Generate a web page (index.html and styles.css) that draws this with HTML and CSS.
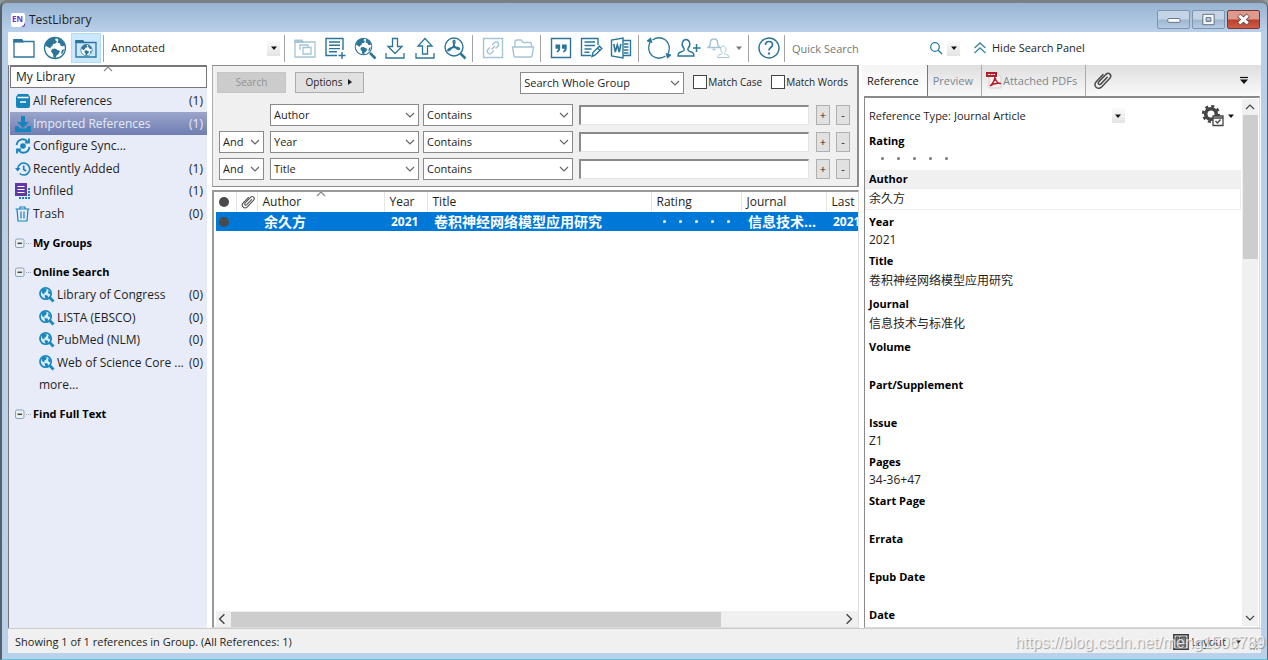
FILE: index.html
```html
<!DOCTYPE html>
<html lang="en">
<head>
<meta charset="utf-8">
<title>TestLibrary</title>
<link rel="stylesheet" href="styles.css">
</head>
<body>
<svg class="defs" aria-hidden="true">
  <symbol id="globe" viewBox="0 0 24 24">
    <circle cx="12" cy="12" r="10.500" fill="#fff" stroke="currentColor" stroke-width="1.300"/>
    <path fill="currentColor" d="M3 7 6 3.500l5-2.200 2 .8-1 2 2 1.200-1.500 2.200-2.500.5-.5 2-2 1 .5 1.500-2-.8L4 10.500 2.500 10zM15 2l4 2.500L22 9l-2.500 1.500-2-1-.5-2-2.500-.7.8-2.300zM9 13l3-.5 3 1.800 2 .7-1.500 3-2 1.500-1 2.700-2-.7-.5-3.500-2-2.500zM19 14l2.500-1-2 4.500-1.500.5z"/>
  </symbol>
  <symbol id="chevron" viewBox="0 0 10 10"><path d="m1 3 4 4 4-4" fill="none" stroke="currentColor" stroke-width="1.200"/></symbol>
  <symbol id="caret" viewBox="0 0 10 10"><path d="M2 3.500h6L5 7z" fill="currentColor"/></symbol>
  <symbol id="clip" viewBox="0 0 20 20"><path d="m13.500 7-6 6.200c-1.800 1.600-3.600-.3-2-2l6.700-7c2.800-2.600 6.300.7 3.800 3.600l-7.800 8.300C4.400 19.500-.3 15 3 11.200l6.500-6.800" transform="translate(1 0)" fill="none" stroke="currentColor" stroke-width="1.400" stroke-linecap="round"/></symbol>
  <symbol id="globesearch" viewBox="0 0 17 17">
    <path d="m11 11 4.500 4.500" stroke="#1a87c0" stroke-width="3"/>
    <circle cx="7" cy="7" r="6" fill="#d9ecf8" stroke="#1a87c0" stroke-width="1.800"/>
    <path fill="#1a87c0" d="m3 3 3-1.500L8.500 3 7 5.500 5.500 6l.5 2-3-1.500zM9.500 3.500l3 2L12 8l-2-1zM6 8.500l3 .5 1 1.500L8 13l-1.500-1z"/>
  </symbol>
  <symbol id="collapse" viewBox="0 0 17 11">
    <rect x=".5" y="1" width="8.500" height="8.500" rx="1.500" fill="#eceef0" stroke="#86a5bd"/>
    <path d="M2.500 5.300h4.500" stroke="#4b4b3c" stroke-width="1.500"/><path d="M11 5.500h6" stroke="#9aa8ba" stroke-dasharray="1 1"/>
  </symbol>
  <symbol id="person" viewBox="0 0 20 20"><path d="M7 10.500C3.500 7 5.500 1.500 9 1.500s5.500 5.500 2 9c-.5 1.500 0 2.300 1.500 2.800l3 1.200c1.300.6 1.500 1.500 1.500 3.500H1c0-2 .3-2.900 1.500-3.500l3-1.200C7 12.800 7.500 12 7 10.500z" fill="none" stroke="currentColor" stroke-width="1.400"/></symbol>
</svg>

<div class="window">
  <header class="titlebar">
    <svg class="app-icon" viewBox="0 0 16 16"><rect x="1" y="1" width="14" height="14" rx="2" fill="#fff"/><path d="M10 15q4 0 5-5v3q0 2-2 2z" fill="#5a2ab8"/><text x="2" y="9.500" class="app-letters">EN</text></svg>
    <h1 class="window-title">TestLibrary</h1>
    <div class="window-buttons">
      <button class="win-btn" aria-label="Minimize"><svg viewBox="0 0 32 18"><rect x="10" y="8" width="13" height="4" rx="1" fill="#fff" stroke="#5d6b7c"/></svg></button>
      <button class="win-btn" aria-label="Maximize"><svg viewBox="0 0 32 18"><path d="M10 3.500h12v11H10zM13.500 7v4h5V7z" fill="#f5f5f5" fill-rule="evenodd" stroke="#5d6b7c"/></svg></button>
      <button class="win-btn win-close" aria-label="Close"><svg viewBox="0 0 32 18"><path d="m11 4.500 10 9m0-9-10 9" stroke="#6a4a4a" stroke-width="5"/><path d="m11.500 5 9 8m0-8-9 8" stroke="#fff" stroke-width="3.200"/></svg></button>
    </div>
  </header>

  <div class="client">
    <div class="toolbar" role="toolbar">
      <div class="tool-group tool-modes">
        <button class="tool" aria-label="Local library"><svg viewBox="0 0 24 24"><path d="M2 5.500h20V21H2z" fill="none" stroke="currentColor" stroke-width="1.300"/><path d="M1.200 6.500V3h9l1.500 2.500v1z" fill="currentColor"/></svg></button>
        <button class="tool" aria-label="Online search"><svg viewBox="0 0 24 24"><use href="#globe"/></svg></button>
        <button class="tool tool-on" aria-label="Integrated library"><svg viewBox="0 0 24 24"><path d="M2 6.500h20V21H2z" fill="none" stroke="currentColor" stroke-width="1.300"/><path d="M1.200 7V4h8l1.500 2.500V7z" fill="currentColor"/><use href="#globe" x="6" y="7.500" width="13" height="13"/></svg></button>
      </div>
      <span class="sep sep-tight"></span>
      <div class="pick style-pick"><select aria-label="Output style"><option>Annotated</option></select><span class="drop"><svg><use href="#caret"/></svg></span></div>
      <span class="sep"></span>
      <div class="tool-group">
        <button class="tool" disabled aria-label="Copy to group"><svg viewBox="0 0 24 24" fill="none" stroke="currentColor" stroke-width="1.300"><path d="M2 6h20v15H2z"/><path d="M1.200 7V3.500h8L11 6v1z" fill="currentColor" stroke="none"/><path d="M7 14V9h8v2M10 11.500h8V18h-8z"/></svg></button>
        <button class="tool" aria-label="New reference"><svg viewBox="0 0 24 24" fill="none" stroke="currentColor" stroke-width="1.400"><path d="M14 19.500H3v-17h17V14M6 6h11M6 9.300h11M6 12.600h11M6 15.800h8M19 16v7M15.500 19.500h7"/></svg></button>
        <button class="tool" aria-label="Online search"><svg viewBox="0 0 24 24"><path d="m17 17 5.500 5.500" stroke="currentColor" stroke-width="2.500"/><use href="#globe" x="1" y="1" width="19" height="19"/></svg></button>
        <button class="tool" aria-label="Import"><svg viewBox="0 0 24 24" fill="none" stroke="currentColor" stroke-width="1.300"><path d="M3 17v5h18v-5M9.500 2.500h5v8h4.500L12 17.500 5 10.500h4.500z"/></svg></button>
        <button class="tool" aria-label="Export"><svg viewBox="0 0 24 24" fill="none" stroke="currentColor" stroke-width="1.300"><path d="M3 17v5h18v-5M9.500 18h5v-8h4.500L12 2.500 5 10h4.500z"/></svg></button>
        <button class="tool" aria-label="Find full text"><svg viewBox="0 0 24 24" fill="none" stroke="currentColor" stroke-width="1.400"><circle cx="11" cy="11" r="9"/><path d="m17.500 17.500 5 5" stroke-width="2.500"/><path d="M10.500 4.500q2-.5 1.300 2.500-1 4-5.300 7.500-1.500.8-1.700-.2.500-1.800 5-2.800 4.500-.8 6.500.7.800 1.300-1 1.300-3-.8-4.700-5.500-.8-2.500-.1-3.500z"/></svg></button>
      </div>
      <span class="sep"></span>
      <div class="tool-group">
        <button class="tool" disabled aria-label="Open link"><svg viewBox="0 0 24 24" fill="none" stroke="currentColor" stroke-width="1.400"><path d="M2.500 2.500h19v19h-19z"/><path d="m10.500 13.500 3.500-3.500m-3-1 2.500-2.500q2-1.500 3.500 0t0 3.500L14.500 12.500m-1.500 2L10.500 17q-2 1.500-3.500 0t0-3.500l2-2"/></svg></button>
        <button class="tool" disabled aria-label="Open file"><svg viewBox="0 0 24 24" fill="none" stroke="currentColor" stroke-width="1.400"><path d="M4 11V6q0-2 2-2h4l2 2.500h7q1.500 0 1.500 2V11M1.500 11h21L21 20q-.3 1-1.500 1h-15q-1.200 0-1.500-1z"/></svg></button>
      </div>
      <span class="sep"></span>
      <div class="tool-group">
        <button class="tool" aria-label="Insert citation"><svg viewBox="0 0 24 24"><path d="M2.500 2.500h19v19h-19z" fill="none" stroke="currentColor" stroke-width="1.400"/><path d="M6.500 8.500h4.700v4q0 3-3.500 4v-1.600q1.400-.6 1.500-2.200H6.500zM13 8.500h4.700v4q0 3-3.500 4v-1.600q1.400-.6 1.500-2.200H13z" fill="currentColor"/></svg></button>
        <button class="tool" aria-label="Format bibliography"><svg viewBox="0 0 24 24" fill="none" stroke="currentColor" stroke-width="1.400"><path d="M12 19.500H2.500v-17H19V9M5.500 6H16M5.500 9.500H16M5.500 13h7M5.500 16.200h5M13 20.500l1-4 6.500-6.500 2.300 2.500-6.500 6.500zM18.500 12l2.300 2.500"/></svg></button>
        <button class="tool" aria-label="Go to word processor"><svg viewBox="0 0 24 24" fill="none" stroke="currentColor" stroke-width="1.400"><path d="M14 2v20L2.500 20V4zM14 4.500h7.500v15H14M15 8h4.500m-4.500 3h4.500m-4.500 3h4.500m-4.500 3h4.500"/><path d="m4.800 8 1.500 8 2-7 2 7 1.500-8" stroke-width="1.600"/></svg></button>
      </div>
      <span class="sep"></span>
      <div class="tool-group">
        <button class="tool" aria-label="Sync library"><svg viewBox="0 0 24 24" fill="none" stroke="currentColor" stroke-width="1.300"><path d="M5.500 4Q12-.5 18.500 4 24.500 9.500 21 18M18.500 20Q12 24.500 5.500 20-.5 14.500 3 6"/><path d="m19.500 18 1 3.500 3-2.500zM4.500 6l-1-3.500-3 2.500z" fill="currentColor" transform="translate(0 0)"/></svg></button>
        <button class="tool" aria-label="Share library"><svg viewBox="0 0 24 24"><use href="#person" x="0" y="2" width="20" height="20"/><path d="M19.500 8v8M16 12h7.500" stroke="currentColor" stroke-width="1.500"/></svg></button>
        <button class="tool" disabled aria-label="Activity feed"><svg viewBox="0 0 24 24"><path d="M1 11.500q2.500-1.500 2.500-5T7 3t3.500 3.500 2.500 5zM5.500 13.500h3" fill="none" stroke="currentColor" stroke-width="1.400"/><use href="#person" x="10" y="9" width="14" height="14"/></svg></button>
        <button class="mini-caret" aria-label="More activity"><svg><use href="#caret"/></svg></button>
      </div>
      <span class="sep"></span>
      <button class="tool" aria-label="Help"><svg viewBox="0 0 24 24" fill="none" stroke="currentColor" stroke-width="1.400"><circle cx="12" cy="12" r="10"/><path d="M8.500 9q0-3.500 3.500-3.500t3.500 3.200q0 1.600-1.800 2.700T12 14.500" stroke-width="1.700"/><path d="M12 16.500v2" stroke-width="2.200"/></svg></button>
      <span class="sep sep-last"></span>
      <input class="quick" type="text" placeholder="Quick Search" aria-label="Quick Search">
      <button class="find" aria-label="Run quick search"><svg viewBox="0 0 14 14"><circle cx="6" cy="6" r="4.300" fill="none" stroke="currentColor" stroke-width="1.300"/><path d="m9 9 4 4" stroke="currentColor" stroke-width="1.500"/></svg></button>
      <button class="drop" aria-label="Search options"><svg><use href="#caret"/></svg></button>
      <button class="hide-panel"><svg viewBox="0 0 14 14"><path d="m1.500 7 5.500-5 5.500 5m-11 5L7 7l5.500 5" fill="none" stroke="#3c84a4" stroke-width="1.300"/></svg>Hide Search Panel</button>
    </div>

    <main class="panes">
      <nav class="sidebar">
        <button class="library-head">My Library<svg class="sort-up"><use href="#chevron"/></svg></button>
        <ul class="groups">
          <li class="group"><svg viewBox="0 0 16 16"><path d="M3 1h10l2 3v9q0 2-2 2H3q-2 0-2-2V4z" fill="#1684bd"/><path d="M2.500 4.500h11M5 9h6" stroke="#fff" stroke-width="1.500"/></svg><span>All References</span><span class="count">(1)</span></li>
          <li class="group group-on"><svg viewBox="0 0 16 16"><path d="M6 0h4v6h4l-6 6-6-6h4zM0 10h3l2 2.500h6L13 10h3v6H0z" fill="#1684bd"/></svg><span>Imported References</span><span class="count">(1)</span></li>
          <li class="group"><svg viewBox="0 0 16 16"><circle cx="8" cy="8" r="2.800" fill="#1684bd"/><path d="M1.500 7q.8-5 5.500-5.700 3.500-.3 6 2.700M14.500 9q-.8 5-5.500 5.700-3.500.3-6-2.700M14 .5v4h-4M2 15.500v-4h4" fill="none" stroke="#1684bd" stroke-width="1.800"/></svg><span>Configure Sync...</span></li>
          <li class="group"><svg viewBox="0 0 16 16"><path d="M2.700 8a6 6 0 1 1 2 4.500M8.700 4.500v4l2.500 1.500" fill="none" stroke="#1684bd" stroke-width="1.600"/><path d="M0 7h5.500L2.700 10.500z" fill="#1684bd"/></svg><span>Recently Added</span><span class="count">(1)</span></li>
          <li class="group"><svg viewBox="0 0 16 16"><path d="M4 15h10V4" fill="none" stroke="#1684bd" stroke-width="2" stroke-dasharray="2 1"/><path d="M0 0h12v13H0z" fill="#6338a6"/><path d="M2.500 3.500h7m-7 3h7m-7 3h7" stroke="#fff" stroke-width="1.200"/></svg><span>Unfiled</span><span class="count">(1)</span></li>
          <li class="group"><svg viewBox="0 0 16 16" fill="none" stroke="#1684bd" stroke-width="1.200"><path d="M.5 3h14M5 3V1h5v2M2 3l1 12h9l1-12M6 5.500v7M9 5.500v7"/></svg><span>Trash</span><span class="count">(0)</span></li>
        </ul>
        <h2 class="group-title"><svg><use href="#collapse"/></svg>My Groups</h2>
        <h2 class="group-title"><svg><use href="#collapse"/></svg>Online Search</h2>
        <ul class="groups online">
          <li class="group"><svg><use href="#globesearch"/></svg><span>Library of Congress</span><span class="count">(0)</span></li>
          <li class="group"><svg><use href="#globesearch"/></svg><span>LISTA (EBSCO)</span><span class="count">(0)</span></li>
          <li class="group"><svg><use href="#globesearch"/></svg><span>PubMed (NLM)</span><span class="count">(0)</span></li>
          <li class="group"><svg><use href="#globesearch"/></svg><span>Web of Science Core ...</span><span class="count">(0)</span></li>
          <li class="group"><span>more...</span></li>
        </ul>
        <h2 class="group-title"><svg><use href="#collapse"/></svg>Find Full Text</h2>
      </nav>

      <section class="center">
        <form class="search-panel">
          <div class="search-top">
            <button class="push" type="button" disabled>Search</button>
            <button class="push" type="button">Options<svg viewBox="0 0 5 8"><path d="M0 1v6l4-3z" fill="currentColor"/></svg></button>
            <div class="pick scope"><select aria-label="Search scope"><option>Search Whole Group</option></select><svg><use href="#chevron"/></svg></div>
            <label class="check"><input type="checkbox">Match Case</label>
            <label class="check"><input type="checkbox">Match Words</label>
          </div>
          <div class="rule">
            <span class="join"></span>
            <div class="pick field"><select aria-label="Field 1"><option>Author</option></select><svg><use href="#chevron"/></svg></div>
            <div class="pick operator"><select aria-label="Operator 1"><option>Contains</option></select><svg><use href="#chevron"/></svg></div>
            <input class="term" type="text" aria-label="Search term 1">
            <button class="step" type="button">+</button><button class="step" type="button">-</button>
          </div>
          <div class="rule">
            <div class="pick join"><select aria-label="Join 2"><option>And</option></select><svg><use href="#chevron"/></svg></div>
            <div class="pick field"><select aria-label="Field 2"><option>Year</option></select><svg><use href="#chevron"/></svg></div>
            <div class="pick operator"><select aria-label="Operator 2"><option>Contains</option></select><svg><use href="#chevron"/></svg></div>
            <input class="term" type="text" aria-label="Search term 2">
            <button class="step" type="button">+</button><button class="step" type="button">-</button>
          </div>
          <div class="rule">
            <div class="pick join"><select aria-label="Join 3"><option>And</option></select><svg><use href="#chevron"/></svg></div>
            <div class="pick field"><select aria-label="Field 3"><option>Title</option></select><svg><use href="#chevron"/></svg></div>
            <div class="pick operator"><select aria-label="Operator 3"><option>Contains</option></select><svg><use href="#chevron"/></svg></div>
            <input class="term" type="text" aria-label="Search term 3">
            <button class="step" type="button">+</button><button class="step" type="button">-</button>
          </div>
        </form>

        <div class="results">
          <div class="results-view">
            <table class="refs">
              <colgroup><col class="c-read"><col class="c-clip"><col class="c-author"><col class="c-year"><col class="c-title"><col class="c-rating"><col class="c-journal"><col class="c-last"></colgroup>
              <thead><tr>
                <th aria-label="Read status"><span class="dot"></span></th>
                <th aria-label="Attachments"><svg class="th-clip"><use href="#clip"/></svg></th>
                <th class="sorted">Author<svg class="sort-up"><use href="#chevron"/></svg></th>
                <th>Year</th><th>Title</th><th>Rating</th><th>Journal</th><th>Last U</th>
              </tr></thead>
              <tbody><tr>
                <td><span class="dot"></span></td><td></td><td>余久方</td><td>2021</td><td>卷积神经网络模型应用研究</td>
                <td><span class="stars stars-light"><i></i><i></i><i></i><i></i><i></i></span></td><td>信息技术...</td><td>2021</td>
              </tr></tbody>
            </table>
          </div>
          <div class="hscroll"><svg class="left"><use href="#chevron"/></svg><div class="htrack"><div class="hthumb"></div></div><svg class="right"><use href="#chevron"/></svg></div>
        </div>
      </section>

      <aside class="details">
        <div class="tabs">
          <button class="tab tab-on">Reference</button>
          <button class="tab">Preview</button>
          <button class="tab tab-pdf"><svg viewBox="0 0 16 17"><path d="M3 1h8l4 4v11H3z" fill="#f4f2f2" stroke="#d5cfcf"/><path d="M0 0h11v5H0z" fill="#b3202c"/><path d="M2 2.500h7" stroke="#fff" stroke-dasharray="2 .7"/><path d="M9 5q-.5 5-5 9 4-3.500 11-2.500-5 0-6-6.500z" fill="none" stroke="#b3202c" stroke-width="1.500"/></svg>Attached PDFs</button>
          <button class="tab tab-clip" aria-label="Attach file"><svg><use href="#clip"/></svg></button>
          <button class="tab-menu" aria-label="Panel menu"><svg viewBox="0 0 10 10"><path d="M1 1.500h8" stroke="currentColor" stroke-width="1.200"/><path d="M1 3.500h8L5 8z" fill="currentColor"/></svg></button>
        </div>
        <div class="record">
          <div class="record-body">
            <div class="type-row">
              <label for="ref-type">Reference Type:</label>
              <div class="pick type-pick"><select id="ref-type"><option>Journal Article</option></select><span class="drop"><svg><use href="#caret"/></svg></span></div>
              <button class="gear" aria-label="Field settings"><svg class="gear-icon" viewBox="0 0 22 22"><circle cx="9" cy="9" r="5.300" fill="none" stroke="#454545" stroke-width="3.600"/><circle cx="9" cy="9" r="7.800" fill="none" stroke="#454545" stroke-width="2.600" stroke-dasharray="3.060 3.060"/><path d="M11 11h10v9.500H11z" fill="#fff" stroke="#454545" stroke-width="1.300"/><path d="M11 13h10m-7.500 3 2 2 3-3.500" fill="none" stroke="#454545" stroke-width="1.300"/></svg><svg class="gear-caret"><use href="#caret"/></svg></button>
            </div>
            <dl class="fields">
              <div class="entry"><dt>Rating</dt><dd><span class="stars"><i></i><i></i><i></i><i></i><i></i></span></dd></div>
              <div class="entry entry-on"><dt>Author</dt><dd class="han">余久方</dd></div>
              <div class="entry"><dt>Year</dt><dd class="latin">2021</dd></div>
              <div class="entry"><dt>Title</dt><dd class="han">卷积神经网络模型应用研究</dd></div>
              <div class="entry"><dt>Journal</dt><dd class="han">信息技术与标准化</dd></div>
              <div class="entry"><dt>Volume</dt><dd></dd></div>
              <div class="entry"><dt>Part/Supplement</dt><dd></dd></div>
              <div class="entry"><dt>Issue</dt><dd class="latin">Z1</dd></div>
              <div class="entry"><dt>Pages</dt><dd class="latin">34-36+47</dd></div>
              <div class="entry"><dt>Start Page</dt><dd></dd></div>
              <div class="entry"><dt>Errata</dt><dd></dd></div>
              <div class="entry"><dt>Epub Date</dt><dd></dd></div>
              <div class="entry"><dt>Date</dt></div>
            </dl>
          </div>
          <div class="vscroll"><svg class="up"><use href="#chevron"/></svg><div class="vtrack"><div class="vthumb"></div></div><svg><use href="#chevron"/></svg></div>
        </div>
      </aside>
    </main>

    <footer class="status">
      <span>Showing 1 of 1 references in Group. (All References: 1)</span>
      <button class="layout"><svg class="layout-icon" viewBox="0 0 16 16"><path d="M.8.8h14.400v14.400H.8z" fill="#ddd" stroke="#3c3c3c" stroke-width="1.500"/><path d="M3 3h3v10H3zM7.500 3H13v6H7.500zM7.500 10.500H13V13H7.500z" fill="#777" stroke="#444"/></svg>Layout<svg class="layout-caret"><use href="#caret"/></svg></button>
      <svg class="grip" viewBox="0 0 10 10"><path d="M7 0h2v2H7zM4 3.500h2v2H4zM7 3.500h2v2H7zM1 7h2v2H1zM4 7h2v2H4zM7 7h2v2H7z" fill="#b5b5b5"/></svg>
    </footer>
  </div>
  <div class="watermark">https://blog.csdn.net/meng1506789</div>
</div>
</body>
</html>
```

FILE: styles.css
```css
* { box-sizing: border-box; }
html, body { height: 100%; margin: 0; }
body { font: 12px/18px "Open Sans", "Noto Sans CJK SC", sans-serif; color: #1e1e1e; background: #8f9c9c; overflow: hidden; }
button, select, input { font: inherit; color: inherit; margin: 0; padding: 0; border: 0; border-radius: 0; background: none; }
select { appearance: none; outline: 0; }
h1, h2, ul, dl, dd { margin: 0; padding: 0; list-style: none; }
svg { display: block; flex: none; width: 10px; height: 10px; }
.defs { position: absolute; width: 0; height: 0; }

.window { position: relative; display: flex; flex-direction: column; height: 100vh; padding: 0 6px 6px; border: 1px solid #55626e; border-width: 3px 1px 1px 2px; border-top-color: #7a8083; border-bottom-color: #5cc3dc; border-radius: 7px 7px 0 0; background: linear-gradient(#98b4d2, #b8cfe9 28px, #b9d1ea); }
.titlebar { display: flex; align-items: center; height: 29px; flex: none; padding: 4px 1px 0 2px; }
.app-icon { width: 16px; height: 16px; }
.app-letters { font: bold 8px "Open Sans", sans-serif; fill: #6a35c9; }
.window-title { flex: 1; margin-left: 3px; font-size: 12px; font-weight: 400; }
.window-buttons { display: flex; gap: 2px; }
.win-btn { width: 33px; height: 19px; border: 1px solid #7f93ab; border-radius: 2px; background: linear-gradient(#c3d4e7 48%, #9fb6d0 52%, #b5cbe3); }
.win-btn svg { width: 31px; height: 17px; }
.win-close { border-color: #7b3530; background: linear-gradient(#dd9a8d 48%, #bd3f2c 52%, #cd5e47); }

.client { flex: 1; display: flex; flex-direction: column; min-height: 0; background: #fff; }
.toolbar { display: flex; align-items: center; height: 33px; flex: none; padding: 0 0 1px 1px; font-size: 11px; }
.tool-group { display: flex; align-items: center; }
.tool-modes { gap: 1px; }
.tool { display: grid; place-items: center; width: 30px; height: 30px; flex: none; color: #2a7599; }
.tool svg { width: 24px; height: 24px; }
.tool:disabled { color: #a5c5d4; }
.tool-on { background: #cce8ff; border: 1px solid #b0dbfb; }
.sep { width: 1px; height: 27px; flex: none; margin: 0 5px 0 2px; background: #a3a3a3; }
.sep-tight { margin-right: 3px; }
.sep-last { margin: 0 7px 0 0; }
.mini-caret { width: 12px; color: #777; }
.drop { display: grid; place-items: center; width: 13px; height: 15px; flex: none; background: linear-gradient(#fafafa, #e4e4e4); color: #111; }
.pick { position: relative; display: flex; align-items: center; }
.pick select { flex: 1; min-width: 0; height: 100%; padding-left: 4px; }
.pick > svg { position: absolute; right: 3px; top: 5px; pointer-events: none; color: #666; }
.style-pick { width: 173px; margin-right: 2px; }
.quick { width: 137px; height: 24px; outline: 0; }
.quick::placeholder { color: #777; opacity: 1; }
.find { width: 18px; color: #2a7fa6; }
.find svg { width: 14px; height: 14px; }
.toolbar > .drop { margin-right: 13px; }
.hide-panel { display: flex; align-items: center; gap: 5px; white-space: nowrap; }
.hide-panel svg { width: 14px; height: 14px; }

.panes { flex: 1; display: flex; min-height: 0; }
.sidebar { width: 199px; flex: none; padding-left: 1px; border-left: 1px solid #777; background: #e7ecf8; }
.library-head { position: relative; display: block; width: 100%; height: 23px; margin-bottom: 2px; padding-left: 5px; border: 1px solid #777; border-top-width: 2px; background: #fff; text-align: left; }
.sort-up { position: absolute; top: -3px; left: 58px; transform: scaleY(-1); color: #888; }
.library-head .sort-up { left: 92px; }
.group { display: flex; align-items: center; height: 22px; gap: 2px; padding: 0 4px 0 5px; white-space: nowrap; }
.group:nth-child(even) { height: 23px; }
.group svg { width: 16px; height: 16px; }
.count { margin-left: auto; }
.group-on { background: linear-gradient(#9ba5cc, #6f7db0); color: #e6eaf8; }
.group-title { display: flex; align-items: center; gap: 1px; height: 22px; margin-top: 7px; padding-left: 5px; font-size: 11px; font-weight: 700; color: #000; }
.group-title svg { width: 17px; height: 11px; }
.groups.online { padding: 1px 0 0 24px; }

.center { flex: 1; min-width: 0; display: flex; flex-direction: column; gap: 3px; margin: 0 3px 0 5px; }
.search-panel { display: flex; flex-direction: column; gap: 5px; padding: 5px 7px 6px 6px; border: 1px solid #8c8c8c; border-left-color: #aaa; border-right-width: 2px; background: #f0f0f0; font-size: 11px; }
.search-top { display: flex; align-items: center; height: 22px; margin: 0 2px 6px -2px; }
.push { display: flex; align-items: center; justify-content: center; gap: 6px; width: 69px; height: 21px; margin-right: 9px; border: 1px solid #adadad; background: #e1e1e1; font-size: 10px; }
.push svg { width: 5px; height: 8px; }
.push:disabled { border-color: #c6c6c6; background: #ccc; color: #929292; }
.search-panel .pick { height: 22px; border: 1px solid #8a8a8a; background: #fff; }
.search-panel .scope { width: 164px; margin: 2px 9px 0 auto; }
.check { display: flex; align-items: center; gap: 1px; margin-left: 9px; font-size: 10px; white-space: nowrap; }
.scope + .check { margin-left: 0; }
.check input { appearance: none; width: 14px; height: 14px; border: 1px solid #444; background: #fff; }
.rule { display: flex; align-items: center; }
.join { width: 45px; flex: none; margin-right: 6px; }
.field { width: 149px; flex: none; margin-right: 4px; }
.operator { width: 150px; flex: none; margin-right: 6px; }
.search-panel select { padding-left: 3px; }
.term { flex: 1; min-width: 0; height: 20px; margin-right: 7px; border: 1px solid #e3e3e3; border-top: 2px solid #8a8a8a; border-left: 2px solid #8a8a8a; background: #fff; outline: 0; }
.step { width: 14px; height: 20px; border: 1px solid #b0b0b0; background: #e1e1e1; line-height: 14px; }
.step + .step { margin-left: 6px; }

.results { flex: 1; min-height: 0; display: flex; flex-direction: column; padding-left: 2px; border: 1px solid #999; border-width: 2px 1px 1px 2px; border-right-color: #ddd; border-bottom-color: #ddd; }
.results-view { flex: 1; overflow: hidden; }
.refs { table-layout: fixed; width: 100%; border-collapse: collapse; }
.refs th, .refs td { overflow: hidden; padding: 0 0 0 5px; text-align: left; white-space: nowrap; }
.refs th { position: relative; height: 20px; border-right: 1px solid #e5e5e5; font-weight: 400; overflow: visible; }
.refs th:last-child { overflow: hidden; border-right: 0; }
.refs th:first-child, .refs td:first-child, .refs th:nth-child(2) { padding-left: 3px; }
.refs td { height: 19px; background: #0078d7; color: #fff; font-weight: 700; line-height: 19px; }
.refs td:nth-child(3), .refs td:nth-child(4), .refs td:nth-child(5), .refs td:nth-child(7), .refs td:nth-child(8) { padding-left: 7px; }
.refs td:nth-child(3), .refs td:nth-child(5), .refs td:nth-child(7) { font-size: 14px; }
.c-read { width: 20px; } .c-clip { width: 21px; } .c-author { width: 127px; } .c-year { width: 43px; }
.c-title { width: 224px; } .c-rating { width: 90px; } .c-journal { width: 85px; }
.th-clip { width: 16px; height: 16px; color: #555; }
.dot { display: block; width: 10px; height: 10px; border-radius: 50%; background: #4a4a4a; }
.stars { display: flex; gap: 13px; padding: 7px 0 0 12px; }
.stars i { width: 3px; height: 3px; border-radius: 50%; background: #777; }
.stars-light { padding: 0 0 0 7px; }
.stars-light i { background: #fff; }
.hscroll { display: flex; align-items: center; height: 16px; background: #f0f0f0; color: #444; }
.htrack { flex: 1; height: 15px; }
.hthumb { width: 80%; height: 100%; background: #cdcdcd; }
.hscroll svg { width: 12px; height: 12px; margin: 0 3px 0 0; }
.hscroll .left { transform: rotate(90deg); }
.hscroll .right { transform: rotate(-90deg); }

.details { display: flex; flex-direction: column; width: 399px; flex: none; }
.tabs { display: flex; height: 31px; flex: none; background: linear-gradient(#dedede, #fafafa); }
.tab { display: flex; align-items: center; padding: 0 8px 0 5px; border-right: 1px solid #aaa; color: #7c8794; white-space: nowrap; font-size: 11px; }
.tab-on { border-right-color: #777; background: linear-gradient(#f4f4f4, #fff); color: #111; }
.tab-pdf { gap: 1px; padding-left: 4px; }
.tab-pdf svg { width: 16px; height: 17px; }
.tab-clip { border: 0; color: #4a4a4a; padding-left: 6px; }
.tab-clip svg { width: 21px; height: 21px; }
.tab-menu { margin-left: auto; padding-right: 12px; color: #111; }
.record { flex: 1; min-height: 0; display: flex; margin: 0 1px 0 2px; border: 1px solid #8a8a8a; border-width: 2px 1px 1px; border-bottom-color: #ddd; border-right-color: #ddd; padding: 1px 1px 1px 0; }
.record-body { flex: 1; min-width: 0; overflow: hidden; }
.type-row { display: flex; align-items: center; height: 33px; padding-left: 4px; font-size: 11px; }
.type-pick { width: 174px; }
.type-pick select { padding-left: 3px; }
.type-pick .drop { margin-left: auto; }
.gear { display: flex; align-items: center; gap: 2px; margin-left: auto; padding-right: 6px; color: #111; }
.gear-icon { width: 22px; height: 22px; }
.entry { margin-bottom: 3px; padding-right: 1px; }
.entry dt { padding-left: 4px; color: #000; font-size: 11px; font-weight: 700; }
.entry dd { height: 17px; padding-left: 4px; }
.entry .latin { height: 18px; }
.entry .han { height: 22px; line-height: 22px; }
.entry-on dt { background: #f0f0f0; }
.entry-on dd { box-shadow: inset 0 0 0 1px #ececec; }
.vscroll { display: flex; flex-direction: column; align-items: center; width: 16px; background: #f0f0f0; color: #444; }
.vscroll svg { margin: 3px 0; }
.vscroll .up { transform: scaleY(-1); }
.vtrack { flex: 1; width: 15px; }
.vthumb { height: 29%; background: #cdcdcd; }

.status { display: flex; align-items: center; height: 25px; flex: none; padding: 2px 2px 0 7px; border-top: 1px solid #ccc; background: #f0f0f0; font-size: 11px; }
.layout { display: flex; align-items: center; gap: 2px; margin-left: auto; }
.layout-icon { width: 16px; height: 16px; }
.layout-caret { margin-left: 5px; }
.grip { align-self: flex-end; margin: 0 0 2px 6px; }
.watermark { position: absolute; right: 2px; bottom: 6px; color: rgba(255, 255, 255, .75); font: 16px/20px "Liberation Sans", sans-serif; text-shadow: 1px 1px 1px rgba(120, 120, 120, .7); pointer-events: none; }
```
